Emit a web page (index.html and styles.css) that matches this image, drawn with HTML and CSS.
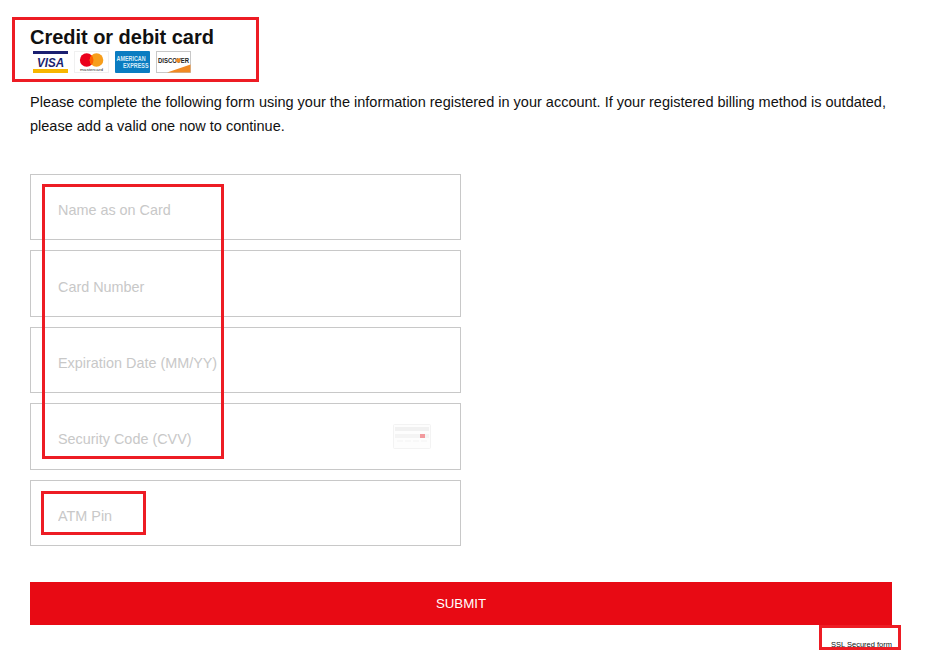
FILE: index.html
```html
<!DOCTYPE html>
<html>
<head>
	<meta charset="utf-8">
	<meta name="viewport" content="width=device-width, initial-scale=1">
	<title>Credit or debit card</title>

	<link rel="stylesheet" href="styles.css">
</head>
<body>

	<div class="page">
		<h1 class="title">Credit or debit card</h1>

		<div class="cards">
			<!-- Visa -->
			<svg class="card-logo" width="35" height="22" viewBox="0 0 35 22">
				<rect width="35" height="22" rx="1" fill="#fff"/>
				<rect width="35" height="3" fill="#1a1f71"/>
				<rect y="18" width="35" height="4" fill="#f7b600"/>
				<text x="4" y="15.7" class="visa-text" textLength="27" lengthAdjust="spacingAndGlyphs">VISA</text>
			</svg>
			<!-- Mastercard -->
			<svg class="card-logo" width="35" height="22" viewBox="0 0 35 22">
				<rect x="0.5" y="0.5" width="34" height="21" fill="#fff" stroke="#f0f0f0"/>
				<circle cx="12.7" cy="9" r="6.8" fill="#eb001b"/>
				<circle cx="22.5" cy="9" r="6.8" fill="#f79e1b"/>
				<path d="M17.6 4.3a6.8 6.8 0 0 1 0 9.4a6.8 6.8 0 0 1 0-9.4z" fill="#ff5f00"/>
				<text x="6" y="20" class="mc-text" textLength="23" lengthAdjust="spacingAndGlyphs">mastercard</text>
			</svg>
			<!-- American Express -->
			<svg class="card-logo" width="35" height="22" viewBox="0 0 35 22">
				<rect width="35" height="22" rx="1" fill="#0a7cc1"/>
				<text transform="translate(1.5 10) scale(1 1.25)" class="amex-text">AMERICAN</text>
				<text transform="translate(8 17.3) scale(1 1.25)" class="amex-text">EXPRESS</text>
			</svg>
			<!-- Discover -->
			<svg class="card-logo" width="35" height="22" viewBox="0 0 35 22">
				<rect x="0.5" y="0.5" width="34" height="21" fill="#fff" stroke="#c8c8c8"/>
				<path d="M11 21.5L34.5 13.5V21.5z" fill="#f08a24"/>
				<text x="2" y="12" class="disc-text" textLength="31" lengthAdjust="spacingAndGlyphs">DISCOVER</text>
				<circle cx="22.3" cy="9.5" r="2.3" fill="#f08a24"/>
			</svg>
		</div>

		<p class="intro">Please complete the following form using your the information registered in your account. If your registered billing method is outdated, please add a valid one now to continue.</p>

		<form class="card-form">
			<div class="field"><input type="text" placeholder="Name as on Card"></div>
			<div class="field"><input type="text" placeholder="Card Number"></div>
			<div class="field"><input type="text" placeholder="Expiration Date (MM/YY)"></div>
			<div class="field">
				<input type="text" placeholder="Security Code (CVV)">
				<!-- Подсказка CVV -->
				<svg class="cvv-hint" width="38" height="25" viewBox="0 0 38 25">
					<rect x="0.5" y="0.5" width="37" height="24" rx="1" fill="#fdfdfd" stroke="#f3f3f3"/>
					<rect x="2" y="3" width="34" height="4" fill="#f1f1f1"/>
					<rect x="2" y="10" width="34" height="4" fill="#f4f4f4"/>
					<rect x="27" y="10" width="5" height="4" fill="#f29a9e"/>
					<path d="M4 17H34" stroke="#f6f6f6" stroke-width="1.5" stroke-dasharray="6 2"/>
				</svg>
			</div>
			<div class="field"><input type="text" placeholder="ATM Pin"></div>
		</form>

		<button class="submit" type="button">SUBMIT</button>
		<div class="ssl">SSL Secured form</div>
	</div>

	<!-- Красные рамки поверх страницы -->
	<div class="mark mark-title"></div>
	<div class="mark mark-fields"></div>
	<div class="mark mark-pin"></div>
	<div class="mark mark-ssl"></div>

</body>
</html>
```

FILE: styles.css
```css
html, body {
	margin: 0;
	height: 650px;
	overflow: hidden;
	background: #fff;
}

body {
	position: relative;
	font-family: "Liberation Sans", Arial, sans-serif;
	color: #111;
}

.page {
	width: 862px;
	margin-left: 30px;
	padding-top: 25px;
}

.title {
	margin: 0;
	font-size: 20px;
	line-height: 24px;
	font-weight: bold;
	letter-spacing: -0.03px;
}

.cards {
	display: flex;
	gap: 6px;
	margin-top: 2px;
	padding-left: 3px;
}

.card-logo {
	display: block;
}

.visa-text {
	font: italic bold 12px "Liberation Sans", sans-serif;
	fill: #1a1f71;
}

.mc-text {
	font: 3.8px "Liberation Sans", sans-serif;
	fill: #333;
}

.amex-text {
	font: bold 5.4px "Liberation Sans", sans-serif;
	fill: #d8ecf8;
}

.disc-text {
	font: bold 6.4px "Liberation Sans", sans-serif;
	fill: #222;
}

.intro {
	margin: 17px 0 0;
	font-size: 14.5px;
	line-height: 24px;
}

.card-form {
	display: flex;
	flex-direction: column;
	gap: 10px;
	width: 431px;
	margin-top: 36px;
}

.field {
	position: relative;
	height: 66.4px;
	box-sizing: border-box;
	border: 1px solid #c8c8c8;
}

.field input {
	display: block;
	box-sizing: border-box;
	width: 100%;
	height: 100%;
	padding: 6px 27px 0;
	border: 0;
	outline: 0;
	background: transparent;
	font-family: "Liberation Sans", Arial, sans-serif;
	font-size: 14.4px;
}

.field input::placeholder {
	color: #c8c8c8;
	opacity: 1;
}

.cvv-hint {
	position: absolute;
	left: 362px;
	top: 19.5px;
}

.submit {
	display: block;
	width: 100%;
	height: 43px;
	margin-top: 36px;
	padding: 1px 0 0;
	border: 0;
	background: #e80a14;
	color: #fff;
	font-family: "Liberation Sans", Arial, sans-serif;
	font-size: 13.3px;
}

.ssl {
	margin-top: 15px;
	font-size: 7.5px;
	line-height: 9px;
	text-align: right;
}

.mark {
	position: absolute;
	box-sizing: border-box;
	border: 3px solid #ed1c24;
}

.mark-title {
	left: 12px;
	top: 17px;
	width: 247px;
	height: 65px;
}

.mark-fields {
	left: 42px;
	top: 184px;
	width: 182px;
	height: 275px;
}

.mark-pin {
	left: 41px;
	top: 491px;
	width: 105px;
	height: 44px;
}

.mark-ssl {
	left: 819px;
	top: 625px;
	width: 82px;
	height: 25px;
}
```
